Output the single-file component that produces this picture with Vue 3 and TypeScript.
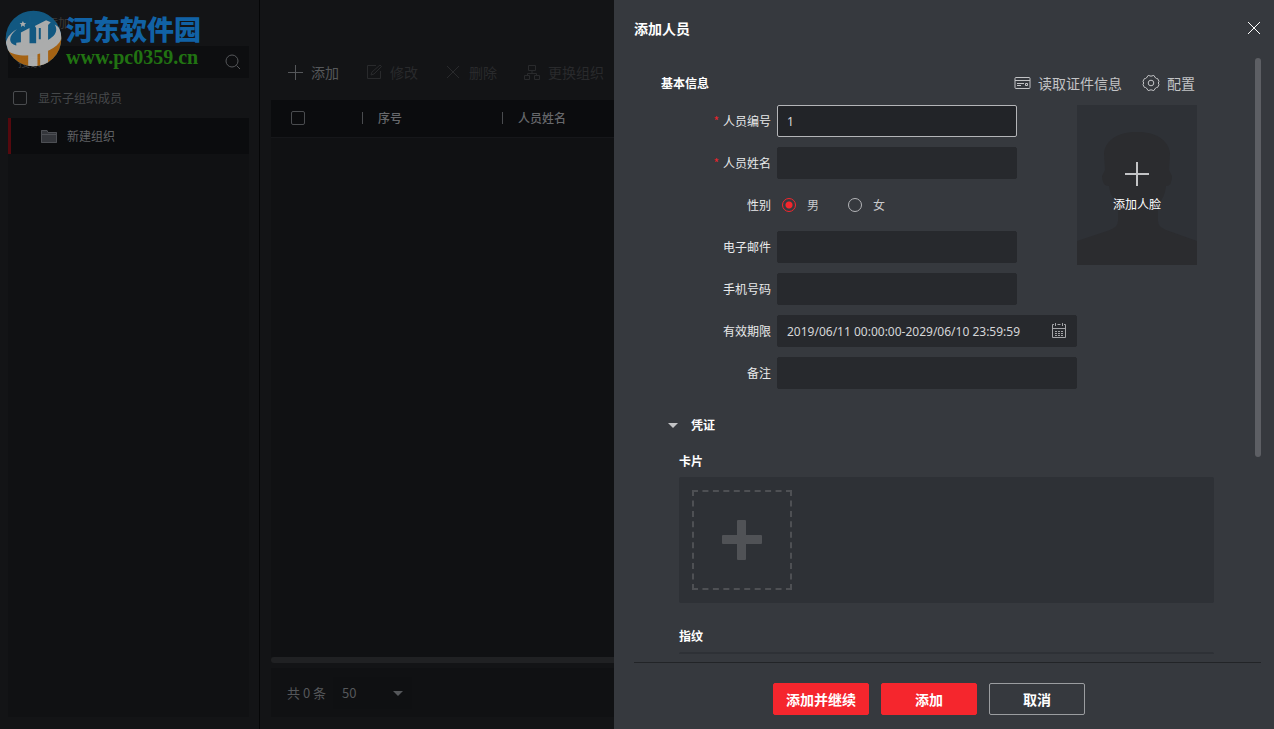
<script setup lang="ts">
import { ref } from 'vue'

interface Field {
  id: string
  label: string
  required?: boolean
  kind: 'text' | 'radio' | 'date'
  wide?: boolean
}

const fields: Field[] = [
  { id: 'person-id', label: '人员编号', required: true, kind: 'text' },
  { id: 'person-name', label: '人员姓名', required: true, kind: 'text' },
  { id: 'gender', label: '性别', kind: 'radio' },
  { id: 'email', label: '电子邮件', kind: 'text' },
  { id: 'phone', label: '手机号码', kind: 'text' },
  { id: 'period', label: '有效期限', kind: 'date', wide: true },
  { id: 'remark', label: '备注', kind: 'text', wide: true },
]

const values = ref<Record<string, string>>({
  'person-id': '1',
  'person-name': '',
  email: '',
  phone: '',
  period: '2019/06/11 00:00:00-2029/06/10 23:59:59',
  remark: '',
})
const gender = ref('男')
const pageSize = ref('50')
const showSub = ref(false)
const allChecked = ref(false)
const keyword = ref('')
</script>

<template>
  <div class="app">
    <aside class="sidebar">
      <div class="side-actions">
        <button class="tool" type="button">
          <svg class="icon" viewBox="0 0 16 16"><path d="M8 1v14M1 8h14" /></svg>添加
        </button>
      </div>
      <div class="search">
        <input v-model="keyword" type="text" placeholder="搜索" aria-label="搜索" />
        <svg class="icon" viewBox="0 0 16 16"><circle cx="7" cy="7" r="6" /><path d="M11.500 11.500L15 15" /></svg>
      </div>
      <label class="sub-check"><input v-model="showSub" class="check" type="checkbox" />显示子组织成员</label>
      <nav class="tree">
        <a class="tree-item" href="#">
          <svg class="folder" viewBox="0 0 16 13">
            <path d="M0 0h6l1 2h9v11H0z" fill="#34363b" />
            <path d="M.5 12.500V.5H6l1 2h8.500v10zM.5 4.500h15" fill="none" stroke="#4d4f54" />
          </svg>新建组织
        </a>
      </nav>
    </aside>

    <main class="main">
      <div class="toolbar">
        <button class="tool" type="button">
          <svg class="icon" viewBox="0 0 16 16"><path d="M8.500 1v15M1 8.500h15" /></svg>添加
        </button>
        <button class="tool off" type="button" disabled>
          <svg class="icon" viewBox="0 0 16 16"><path d="M10 1.500H1.500v13h13V7M5 11l1-3 8-7 1.500 1.500L8 10z" /></svg>修改
        </button>
        <button class="tool off" type="button" disabled>
          <svg class="icon" viewBox="0 0 16 16"><path d="M2 2l12 12M14 2L2 14" /></svg>删除
        </button>
        <button class="tool off" type="button" disabled>
          <svg class="icon" viewBox="0 0 16 16"><path d="M4.500 1.500h7v5h-7zM8 6.500v3M3.500 11V9.500h9V11M.5 11.500h5v4h-5zM10.500 11.500h5v4h-5z" /></svg>更换组织
        </button>
      </div>
      <div class="table-wrap">
        <table>
          <thead>
            <tr>
              <th class="col-check"><input v-model="allChecked" class="check" type="checkbox" aria-label="全选" /></th>
              <th class="col-no"><span>序号</span></th>
              <th><span>人员姓名</span></th>
            </tr>
          </thead>
        </table>
      </div>
      <div class="h-scroll"></div>
      <div class="pager">
        <label for="page-size">共 0 条</label>
        <div class="select">
          <select id="page-size" v-model="pageSize">
            <option>20</option>
            <option>50</option>
            <option>100</option>
          </select>
          <i class="caret"></i>
        </div>
      </div>
    </main>

    <section class="drawer" role="dialog" aria-labelledby="drawer-title">
      <header class="drawer-head">
        <h1 id="drawer-title">添加人员</h1>
        <button class="close" type="button" aria-label="关闭">
          <svg viewBox="0 0 12 12"><path d="M0 0l12 12M12 0L0 12" /></svg>
        </button>
      </header>

      <div class="drawer-body">
        <div class="section-head">
          <h2>基本信息</h2>
          <div class="links">
            <button class="link" type="button">
              <svg class="card-icon" viewBox="0 0 17 14">
                <path d="M2 1.500h13q1 0 1 1v9q0 1-1 1H2q-1 0-1-1v-9q0-1 1-1zM1 4.500h15M3 7.500h7M3 9.500h4" />
                <path d="M11.500 7.500h2v2h-2z" />
              </svg>读取证件信息
            </button>
            <button class="link" type="button">
              <svg class="gear-icon" viewBox="0 0 18 18">
                <path d="M6.200 1.400Q9 3 11.800 1.400L13.600 4Q14.300 4.700 15.600 4.600L17 7.300Q15.600 9 17 10.700L15.600 13.400Q14.300 13.300 13.600 14L11.800 16.600Q9 15 6.200 16.600L4.400 14Q3.700 13.300 2.400 13.400L1 10.700Q2.400 9 1 7.300L2.400 4.600Q3.700 4.700 4.400 4z" stroke-linejoin="round" />
                <circle cx="9" cy="9" r="2.800" />
              </svg>配置
            </button>
          </div>
        </div>

        <div class="basic">
          <form class="form" @submit.prevent>
            <div v-for="f in fields" :key="f.id" class="row">
              <span v-if="f.kind === 'radio'" class="label">{{ f.label }}</span>
              <label v-else class="label" :for="f.id"><em v-if="f.required">*</em>{{ f.label }}</label>
              <div v-if="f.kind === 'radio'" class="radios" role="radiogroup" aria-label="性别">
                <label><input v-model="gender" type="radio" name="gender" value="男" />男</label>
                <label><input v-model="gender" type="radio" name="gender" value="女" />女</label>
              </div>
              <div v-else class="control" :class="{ wide: f.wide }">
                <input
                  :id="f.id"
                  v-model="values[f.id]"
                  type="text"
                  :class="{ active: f.id === 'person-id', date: f.kind === 'date' }"
                />
                <svg v-if="f.kind === 'date'" class="calendar" viewBox="0 0 14 15">
                  <path d="M2 1.500H.5v13h13v-13H12M.5 5.500h13M3.500 0v3M10.500 0v3M5.500 1.500h3" />
                  <path d="M3 8.500h8M3 10.500h8M3 12.500h8" stroke-dasharray="2 1" />
                </svg>
              </div>
            </div>
          </form>
          <button class="photo" type="button">
            <svg class="silhouette" viewBox="0 0 120 160">
              <path d="M0 160v-24l33-11q8-3 8-9v-17c-5-5-8-10-9-18q-7 0-7-10l3-6-1-17C29 34 42 27 60 27s31 7 33 21l-1 17 3 6q0 10-6 10c-1 8-3 13-8 18v17q0 6 8 9l31 11v24z" />
            </svg>
            <svg class="plus" viewBox="0 0 24 24"><path d="M12 0v24M0 12h24" /></svg>
            <span>添加人脸</span>
          </button>
        </div>

        <button class="fold" type="button"><i class="caret light"></i>凭证</button>
        <h3>卡片</h3>
        <div class="panel">
          <button class="add-card" type="button" aria-label="添加卡片">
            <svg viewBox="0 0 40 40"><rect x="15" width="9" height="40" rx="1" /><rect y="15" width="40" height="9" rx="1" /></svg>
          </button>
        </div>
        <h3 class="finger">指纹</h3>
        <div class="panel"></div>
        <i class="v-scroll"></i>
      </div>

      <footer class="drawer-foot">
        <button class="btn primary" type="button">添加并继续</button>
        <button class="btn primary" type="button">添加</button>
        <button class="btn" type="button">取消</button>
      </footer>
    </section>

    <div class="brand">
      <svg class="brand-logo" viewBox="14 30 172 172">
        <defs><clipPath id="disc"><circle cx="100" cy="116" r="84" /></clipPath></defs>
        <g clip-path="url(#disc)">
          <path d="M14 30h172v172H14z" fill="#125c87" />
          <path d="M14 146Q90 182 186 104v98H14z" fill="#ad6714" />
          <path d="M62 98l26-14v46h20V84l-4-6 34-17 14 6-8 8v50l-28 10-28 6H48v-12l14-2z" fill="#b4b5b5" />
          <path d="M116 84h6v34h-6z" fill="#125c87" />
          <path d="M84 152h28v52H84zM120 148l24-10v62h-24z" fill="#b4b5b5" />
          <path d="M50 88C20 104 8 134 22 152c30 28 126 16 156-24 14-20 6-44-14-54 12 20 0 38-28 50-36 16-88 20-102 6-10-12-2-28 16-42z" fill="#b4b5b5" />
          <path d="M68 63l3 6 7 1-5 4 1 7-6-4-6 4 1-7-5-4 7-1z" fill="#b4b5b5" />
        </g>
      </svg>
      <div class="brand-text">
        <strong>河东软件园</strong>
        <span>www.pc0359.cn</span>
      </div>
    </div>
  </div>
</template>

<style>
html,
body,
#app {
  height: 100%;
}
body {
  margin: 0;
  background: #131416;
}
</style>

<style scoped>
* {
  box-sizing: border-box;
}
.app {
  position: relative;
  display: flex;
  height: 100%;
  overflow: hidden;
  background: #131416;
  color: #55575a;
  font: 12px/20px 'Noto Sans CJK SC', 'Noto Sans', sans-serif;
}
button,
input,
select {
  margin: 0;
  padding: 0;
  border: 0;
  background: none;
  color: inherit;
  font: inherit;
  outline: 0;
}
svg {
  display: block;
  flex: none;
}
.icon {
  width: 16px;
  height: 16px;
  fill: none;
  stroke: currentColor;
}
.tool {
  display: flex;
  align-items: center;
  gap: 8px;
  font-size: 14px;
}
.tool.off {
  color: #292a2c;
}
.check {
  appearance: none;
  width: 14px;
  height: 14px;
  border: 1px solid #4a4c4f;
  border-radius: 2px;
}

.sidebar {
  display: flex;
  flex: none;
  flex-direction: column;
  width: 260px;
  padding: 0 10px 12px 8px;
  border-right: 1px solid #050607;
}
.side-actions {
  display: flex;
  align-items: center;
  height: 46px;
  padding-left: 14px;
  color: #3b3835;
}
.side-actions .tool {
  font-size: 12px;
}
.search {
  display: flex;
  align-items: center;
  height: 32px;
  padding: 0 8px 0 10px;
  background: #0d0e10;
}
.search input {
  flex: 1;
  min-width: 0;
}
.search input::placeholder {
  color: #393a3c;
  opacity: 1;
}
.sub-check {
  display: flex;
  align-items: center;
  gap: 11px;
  height: 40px;
  padding-left: 5px;
  color: #46484a;
}
.tree {
  flex: 1;
  background: #101113;
}
.tree-item {
  display: flex;
  align-items: center;
  gap: 10px;
  height: 36px;
  padding-left: 30px;
  border-left: 3px solid #55090e;
  background: #0b0c0e;
  color: #606265;
  text-decoration: none;
}
.folder {
  width: 16px;
  height: 13px;
}

.main {
  display: flex;
  flex: 1;
  flex-direction: column;
  min-width: 0;
  padding: 44px 0 12px 11px;
}
.toolbar {
  display: flex;
  align-items: center;
  gap: 27px;
  height: 56px;
  padding-left: 16px;
}
.table-wrap {
  flex: 1;
  background: #101113;
}
table {
  width: 100%;
  border-collapse: collapse;
  table-layout: fixed;
}
th {
  height: 37px;
  padding: 0;
  border-bottom: 1px solid #16171a;
  background: #0b0c0e;
  color: #66686b;
  font-weight: 500;
  text-align: left;
}
th span {
  display: block;
  padding-left: 15px;
  border-left: 1px solid #4a4c4f;
  line-height: 12px;
}
th .check {
  display: block;
  margin-left: 20px;
}
.col-check {
  width: 91px;
}
.col-no {
  width: 140px;
}
.h-scroll {
  height: 6px;
  border-radius: 3px;
  background: #202123;
}
.pager {
  display: flex;
  align-items: center;
  gap: 7px;
  height: 49px;
  margin-top: 5px;
  padding-left: 16px;
  background: #101113;
  font-size: 13px;
}
.select {
  position: relative;
  width: 79px;
  background: #0f1012;
}
.select select {
  appearance: none;
  width: 100%;
  height: 32px;
  padding-left: 9px;
}
.caret {
  width: 0;
  border: 5px solid transparent;
  border-top-color: #55575a;
  border-bottom: 0;
}
.select .caret {
  position: absolute;
  top: 14px;
  right: 9px;
  pointer-events: none;
}

.drawer {
  position: absolute;
  top: 0;
  right: 0;
  bottom: 0;
  display: flex;
  flex-direction: column;
  width: 660px;
  background: #36393e;
  color: #e8e9ea;
}
h1,
h2,
h3 {
  margin: 0;
  color: #fff;
  font-size: 12px;
  font-weight: 700;
}
.drawer-head {
  display: flex;
  align-items: center;
  justify-content: space-between;
  flex: none;
  height: 56px;
  padding: 0 14px 0 20px;
}
h1 {
  font-size: 14px;
}
.close svg {
  width: 12px;
  height: 12px;
  overflow: visible;
  stroke: #fff;
}
.drawer-body {
  position: relative;
  flex: 1;
  min-height: 0;
  margin-top: 2px;
  padding: 15px 60px 0 47px;
  overflow: hidden;
}
.section-head {
  display: flex;
  align-items: center;
  justify-content: space-between;
  height: 20px;
  padding-right: 19px;
}
.links {
  display: flex;
  gap: 20px;
}
.link {
  display: flex;
  align-items: center;
  gap: 7px;
  color: #c3c4c6;
  font-size: 14px;
}
.link svg {
  fill: none;
  stroke: currentColor;
}
.card-icon {
  width: 17px;
  height: 14px;
}
.gear-icon {
  width: 18px;
  height: 18px;
}
.basic {
  display: flex;
  align-items: flex-start;
  margin-top: 12px;
}
.form {
  display: flex;
  flex-direction: column;
  gap: 10px;
  width: 416px;
}
.row {
  display: flex;
  align-items: center;
  gap: 6px;
  height: 32px;
}
.label {
  width: 110px;
  text-align: right;
}
.label em {
  margin-right: 4px;
  color: #e8242c;
  font-style: normal;
}
.control {
  position: relative;
  width: 240px;
}
.control.wide {
  width: 300px;
}
.control input {
  display: block;
  width: 100%;
  height: 32px;
  padding: 0 9px;
  border: 1px solid #27292d;
  border-radius: 2px;
  background: #27292d;
  color: #d5d6d8;
  font-family: 'Noto Sans', 'Noto Sans CJK SC', sans-serif;
}
.control input.active {
  border-color: #b4b5b8;
  background: #222428;
}
.control input.date {
  padding-right: 32px;
}
.calendar {
  position: absolute;
  top: 8px;
  right: 11px;
  width: 14px;
  height: 15px;
  fill: none;
  stroke: #a4a5a8;
}
.radios {
  display: flex;
  gap: 29px;
  padding-left: 5px;
  color: #c8c9cb;
}
.radios label {
  display: flex;
  align-items: center;
  gap: 11px;
}
.radios input {
  appearance: none;
  width: 14px;
  height: 14px;
  border: 1px solid #b4b5b8;
  border-radius: 50%;
}
.radios input:checked {
  border-color: #f5262d;
  background: radial-gradient(circle, #f5262d 3px, transparent 4px);
}
.photo {
  position: relative;
  display: flex;
  flex-direction: column;
  align-items: center;
  gap: 8px;
  width: 120px;
  height: 160px;
  padding-top: 57px;
  background: #2e3136;
  color: #fff;
}
.silhouette {
  position: absolute;
  inset: 0;
  fill: #2b2c2f;
}
.plus {
  position: relative;
  width: 24px;
  height: 24px;
  stroke: #c3c4c6;
  stroke-width: 2;
}
.photo span {
  position: relative;
}
.fold {
  display: flex;
  align-items: center;
  gap: 13px;
  margin: 26px 0 16px 7px;
  color: #fff;
  font-weight: 700;
}
.caret.light {
  border-top-color: #c3c4c6;
}
h3 {
  margin-left: 18px;
}
.panel {
  height: 126px;
  margin: 6px 0 0 18px;
  padding: 13px;
  border-radius: 2px;
  background: #2e3136;
}
.add-card {
  display: flex;
  align-items: center;
  justify-content: center;
  width: 100px;
  height: 100px;
  border: 2px dashed #4e5054;
}
.add-card svg {
  width: 40px;
  height: 40px;
  fill: #505256;
}
.finger {
  margin-top: 23px;
}
.v-scroll {
  position: absolute;
  top: 0;
  right: 13px;
  width: 6px;
  height: 67%;
  border-radius: 3px;
  background: #5d5f64;
}
.drawer-foot {
  display: flex;
  flex: none;
  justify-content: center;
  gap: 12px;
  margin: 8px 13px 0 20px;
  padding: 20px 37px 14px 0;
  border-top: 1px solid #222427;
}
.btn {
  width: 96px;
  height: 32px;
  border: 1px solid #9b9da0;
  border-radius: 2px;
  color: #fff;
  font-size: 14px;
  font-weight: 700;
}
.btn.primary {
  border-color: #f5262d;
  background: #f5262d;
}

.brand {
  position: absolute;
  top: 10px;
  left: 5px;
  display: flex;
  gap: 4px;
  pointer-events: none;
}
.brand-logo {
  width: 57px;
  height: 57px;
  opacity: 0.95;
}
.brand-text {
  display: flex;
  flex-direction: column;
}
.brand-text strong {
  color: #1162a5;
  font-size: 27px;
  font-weight: 900;
  line-height: 38px;
}
.brand-text span {
  color: #217312;
  font: 700 20px/18px 'Liberation Serif', serif;
}
</style>
